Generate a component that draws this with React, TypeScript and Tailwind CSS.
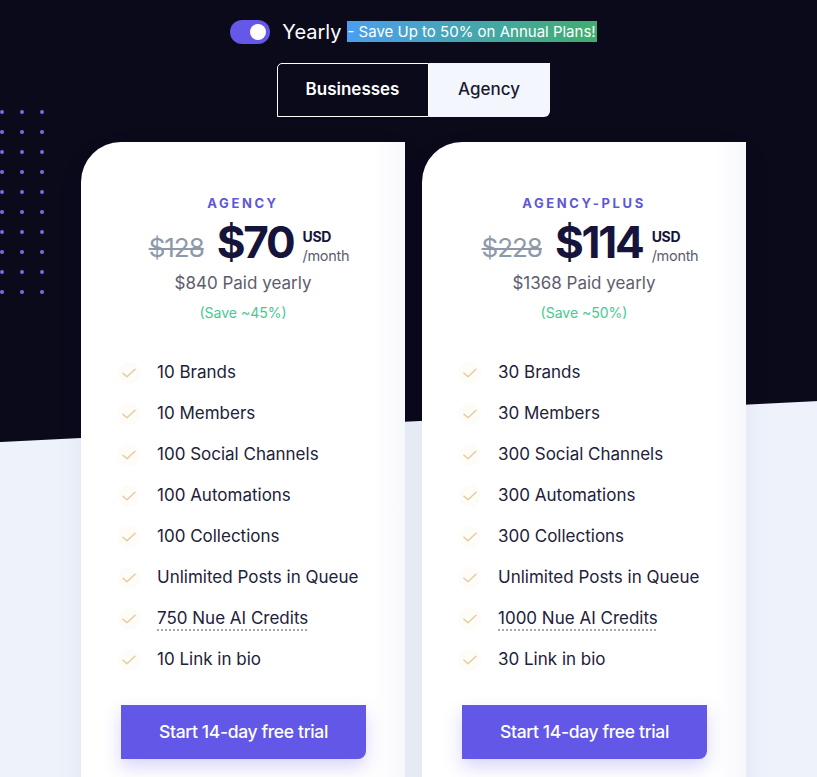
import React, { useState } from 'react';

interface Plan {
  name: string;
  oldPrice: string;
  price: string;
  yearly: string;
  save: string;
  features: string[];
  underlined: number;
}

const plans: Plan[] = [
  {
    name: 'AGENCY',
    oldPrice: '$128',
    price: '$70',
    yearly: '$840 Paid yearly',
    save: '(Save ~45%)',
    features: [
      '10 Brands',
      '10 Members',
      '100 Social Channels',
      '100 Automations',
      '100 Collections',
      'Unlimited Posts in Queue',
      '750 Nue AI Credits',
      '10 Link in bio',
    ],
    underlined: 6,
  },
  {
    name: 'AGENCY-PLUS',
    oldPrice: '$228',
    price: '$114',
    yearly: '$1368 Paid yearly',
    save: '(Save ~50%)',
    features: [
      '30 Brands',
      '30 Members',
      '300 Social Channels',
      '300 Automations',
      '300 Collections',
      'Unlimited Posts in Queue',
      '1000 Nue AI Credits',
      '30 Link in bio',
    ],
    underlined: 6,
  },
];

const Check = () => (
  <span className="flex h-[22px] w-[22px] items-center justify-center rounded-full bg-[#fefcf8]">
    <svg width="14" height="10" viewBox="0 0 14 10" fill="none">
      <path d="M1 5.2 L5 8.8 L13 1.2" stroke="#e6cb9d" strokeWidth="1.5" strokeLinecap="round" strokeLinejoin="round" />
    </svg>
  </span>
);

const Dots = () => (
  <div className="grid w-fit grid-cols-3 gap-[16px]">
    {Array.from({ length: 30 }).map((_, i) => (
      <span key={i} className="h-[4px] w-[4px] rounded-full bg-[#7371e6]" />
    ))}
  </div>
);

const PlanCard = ({ plan }: { plan: Plan }) => (
  <div className="w-[324px] shrink-0 rounded-tl-[40px] bg-[linear-gradient(90deg,#ffffff_0%,#ffffff_90%,#f7f8fb_100%)] pt-[52px] shadow-[0_10px_30px_rgba(30,40,90,0.06)]">
    <div className="text-center text-[13px] font-bold tracking-[0.2em] text-[#5e57d8]">{plan.name}</div>
    <div className="mt-[6px] flex items-end justify-center pl-[12px]">
      <span className="mb-[3px] text-[26px] leading-none tracking-[-0.04em] text-[#8d99aa] line-through decoration-[2px]">
        {plan.oldPrice}
      </span>
      <span className="ml-[13px] text-[44px] font-bold leading-none tracking-[-0.05em] text-[#16143a]">
        {plan.price}
      </span>
      <span className="ml-[9px] flex flex-col leading-none">
        <span className="text-[14px] font-bold tracking-[-0.02em] text-[#16143a]">USD</span>
        <span className="mt-[5px] text-[14.5px] tracking-[-0.02em] text-[#5d5c6c]">/month</span>
      </span>
    </div>
    <div className="mt-[7px] text-center text-[17px] text-[#5e5d6e]">{plan.yearly}</div>
    <div className="mt-[6px] text-center text-[14px] text-[#45c98f]">{plan.save}</div>

    <ul className="mt-[38px] flex flex-col gap-[17px] pl-[37px]">
      {plan.features.map((f, i) => (
        <li key={f} className="flex h-[24px] items-center">
          <Check />
          <span
            className={
              i === plan.underlined
                ? 'ml-[17px] text-[17px] text-[#22213a] underline decoration-dotted decoration-[#8a8a9a] underline-offset-[5px]'
                : 'ml-[17px] text-[17px] text-[#22213a]'
            }
          >
            {f}
          </span>
        </li>
      ))}
    </ul>

    <div className="mt-[33px] px-[40px] pb-[40px]">
      <button className="flex h-[54px] w-[245px] items-center justify-center rounded-br-[8px] bg-[#6357e7] text-[17.5px] font-medium tracking-[-0.02em] text-white shadow-[0_8px_18px_rgba(99,87,231,0.25)]">
        Start 14-day free trial
      </button>
    </div>
  </div>
);

export default function App() {
  const [yearly, setYearly] = useState(true);
  const [tab, setTab] = useState<'businesses' | 'agency'>('businesses');

  return (
    <div className="h-[777px] overflow-hidden bg-[linear-gradient(177.13deg,#0b0a1b_441px,#eef2fb_442px)] font-['Inter','Liberation_Sans',sans-serif]">
      <div className="flex">
        <div className="w-[81px] shrink-0 pt-[110px]">
          <Dots />
        </div>
        <div className="w-[664px] shrink-0">
          <div className="flex h-[63px] items-start justify-center pt-[20px] pl-[1px]">
            <button
              onClick={() => setYearly(!yearly)}
              className="flex h-[24px] w-[40px] items-center justify-end rounded-full bg-[#6557e8] px-[4px]"
            >
              <span className="h-[16px] w-[16px] rounded-full bg-white" />
            </button>
            <span className="ml-[12px] text-[20px] leading-[24px] text-white">Yearly</span>
            <span className="ml-[5px] mt-[1px] bg-[linear-gradient(90deg,#4a9ff0,#3fae6c)] px-[1px] text-[15px] leading-[21px] text-white">
              - Save Up to 50% on Annual Plans!
            </span>
          </div>

          <div className="flex justify-center">
            <div className="flex h-[54px]">
              <button
                onClick={() => setTab('businesses')}
                className="flex w-[152px] items-center justify-center rounded-tl-[5px] border border-white bg-[#0b0a1b] text-[17px] font-semibold text-white"
              >
                Businesses
              </button>
              <button
                onClick={() => setTab('agency')}
                className="flex w-[121px] items-center justify-center rounded-br-[6px] bg-[#f3f6fd] text-[17px] font-medium text-[#1b1a33]"
              >
                Agency
              </button>
            </div>
          </div>

          <div className="mt-[25px] flex gap-[17px]">
            {plans.map((p) => (
              <PlanCard key={p.name} plan={p} />
            ))}
          </div>
        </div>
      </div>
    </div>
  );
}
